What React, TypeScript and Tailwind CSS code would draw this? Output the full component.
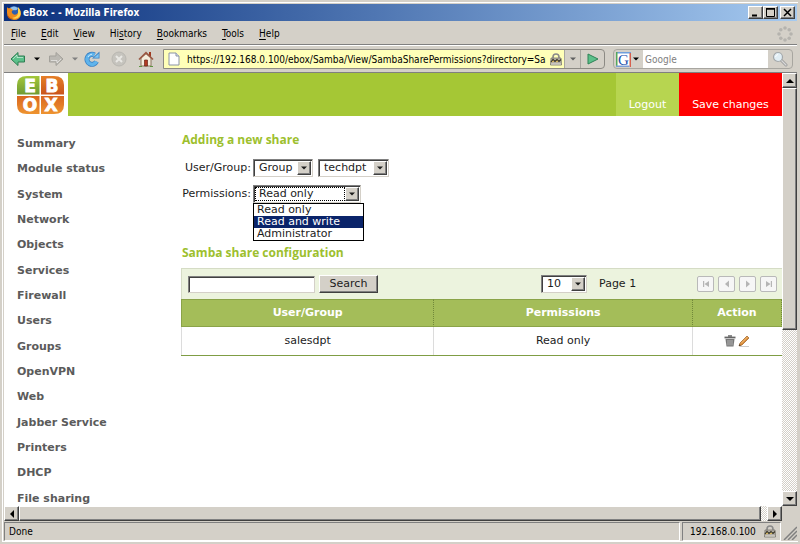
import { useState } from "react"
import type { ReactNode } from "react"

const menuItems = ["File", "Edit", "View", "History", "Bookmarks", "Tools", "Help"]

const navItems = [
  "Summary",
  "Module status",
  "System",
  "Network",
  "Objects",
  "Services",
  "Firewall",
  "Users",
  "Groups",
  "OpenVPN",
  "Web",
  "Jabber Service",
  "Printers",
  "DHCP",
  "File sharing"
]

const permissions = ["Read only", "Read and write", "Administrator"]

const shares = [{ name: "salesdpt", permission: "Read only" }]

const raised =
  "border border-t-white border-l-white border-r-[#404040] border-b-[#404040] bg-[#d4d0c8] shadow-[inset_-1px_-1px_0_#808080]"

const sunken =
  "border border-t-[#808080] border-l-[#808080] border-r-[#d4d0c8] border-b-[#d4d0c8] bg-white shadow-[inset_1px_1px_0_#404040]"

function Triangle({ dir, className }: { dir: "up" | "down" | "left" | "right"; className?: string }) {
  const points = {
    up: "0,6 8,6 4,2",
    down: "0,2 8,2 4,6",
    left: "6,0 6,8 2,4",
    right: "2,0 2,8 6,4"
  }

  return (
    <svg viewBox="0 0 8 8" className={className ?? "size-2"} fill="currentColor">
      <polygon points={points[dir]} />
    </svg>
  )
}

function FirefoxIcon() {
  return (
    <svg viewBox="0 0 16 16" className="size-4">
      <circle cx="8" cy="7" r="6" fill="#2f5fae" />
      <path d="M4 3Q8 0 12 3Q11 6 8 5Q6 6 4 3Z" fill="#8fc1ee" />
      <path d="M1 2Q2 4 4 3Q6 4 7 5Q5 6 6 8Q8 11 11 9Q13 7 12 3Q15 5 15 9Q14 15 8 15Q1 14 1 8Z" fill="#ee8a1c" />
      <path d="M12 2Q16 6 14 11Q11 15 6 13Q12 12 12 8Z" fill="#ffd34d" />
      <path d="M1 8Q2 13 7 14Q3 14 2 12Z" fill="#b8480d" />
    </svg>
  )
}

function ArrowIcon({ flip, fill, stroke }: { flip?: boolean; fill: string; stroke: string }) {
  return (
    <svg viewBox="0 0 16 16" className={flip ? "size-4 rotate-180" : "size-4"}>
      <path d="M1 8L8 1.500V5H14.500V11H8V14.500Z" fill={fill} stroke={stroke} strokeLinejoin="round" />
      <path d="M3 8L7 4V6.500H13" fill="none" stroke="#fff" strokeOpacity="0.5" />
    </svg>
  )
}

function ReloadIcon() {
  return (
    <svg viewBox="0 0 16 16" className="size-4">
      <path d="M12.500 10.500A5 5 0 1 1 10.500 4" fill="none" stroke="#3b82c4" strokeWidth="5" />
      <path d="M8 7.500H15.500V.5Z" fill="#3b82c4" />
      <path d="M12.500 10.500A5 5 0 1 1 10.500 4" fill="none" stroke="#5fb4ec" strokeWidth="3.400" />
      <path d="M10 6.700H14.700V2.500Z" fill="#7cc6f5" />
      <path d="M4 6Q5 3.500 8 3.200" fill="none" stroke="#c9eaff" />
    </svg>
  )
}

function StopIcon() {
  return (
    <svg viewBox="0 0 16 16" className="size-4">
      <circle cx="8" cy="8" r="7" fill="#c6c4be" stroke="#b9b7b1" />
      <path d="M5 5L11 11M11 5L5 11" stroke="#e9e8e4" strokeWidth="2" />
    </svg>
  )
}

function HomeIcon() {
  return (
    <svg viewBox="0 0 16 16" className="size-4">
      <path d="M11 1H13V6H11Z" fill="#a03a20" />
      <path d="M3 7L8 2.500L13 7V15H3Z" fill="#f4eddd" stroke="#8a7560" />
      <path d="M1 8.500L8 1.800L15 8.500" fill="none" stroke="#9a5844" strokeWidth="1.700" />
      <path d="M6.500 9H9.500V15H6.500Z" fill="#b23a24" stroke="#6d2417" strokeWidth=".7" />
      <path d="M1 15.500H4M12 15.500H15" stroke="#5d9440" />
    </svg>
  )
}

function LockIcon() {
  return (
    <svg viewBox="0 0 12 13" className="h-[13px] w-3 shrink-0">
      <path d="M3 6V4Q3 1 6 1T9 4V6" fill="none" stroke="#8a8a8a" strokeWidth="1.600" />
      <path d="M1 5H11L11.500 12H.5Z" fill="#b4b0a8" stroke="#77746c" strokeWidth=".8" />
      <path d="M1 9L3 6.500L5 8.500L7 6.500L9 8.500L11 6.500" fill="none" stroke="#3c3828" strokeWidth="1.200" />
      <path d="M2 9L4 8M6 9L8 8" stroke="#e0ba4c" />
      <path d="M1 11H11" stroke="#dedbd4" />
    </svg>
  )
}

function SearchIcon() {
  return (
    <svg viewBox="0 0 16 16" className="size-4">
      <path d="M9 9L14 14" stroke="#9a9a9a" strokeWidth="3" strokeLinecap="round" />
      <path d="M9 9L14 14" stroke="#d8d8d8" strokeWidth="1.300" strokeLinecap="round" />
      <circle cx="6" cy="6" r="4.500" fill="#e1eef5" stroke="#a4a8aa" strokeWidth="1.200" />
      <path d="M3.500 6Q4 4 6 3.500" fill="none" stroke="#fff" />
    </svg>
  )
}

function Throbber() {
  const dots = [
    [8, 2],
    [12.2, 3.8],
    [14, 8],
    [12.2, 12.2],
    [8, 14],
    [3.8, 12.2],
    [2, 8],
    [3.8, 3.8]
  ]

  return (
    <svg viewBox="0 0 16 16" className="size-4" fill="#b5b3ae">
      {dots.map(([x, y]) => (
        <circle key={`${x}-${y}`} cx={x} cy={y} r="1.800" />
      ))}
    </svg>
  )
}

function EboxLogo() {
  return (
    <svg viewBox="0 0 47 38" className="h-[38px] w-[47px]" role="img" aria-label="eBox">
      <defs>
        <linearGradient id="green" x1="0" y1="0" x2="0" y2="1">
          <stop offset="0" stopColor="#a3c83a" />
          <stop offset="1" stopColor="#6f9a33" />
        </linearGradient>
        <linearGradient id="rust" x1="0" y1="0" x2="0" y2="1">
          <stop offset="0" stopColor="#e57f28" />
          <stop offset="1" stopColor="#c9541c" />
        </linearGradient>
        <linearGradient id="orange" x1="0" y1="0" x2="0" y2="1">
          <stop offset="0" stopColor="#d9661f" />
          <stop offset="1" stopColor="#ee9430" />
        </linearGradient>
      </defs>
      <path d="M22.500 0V18.500H0V9Q0 0 10 0Z" fill="url(#green)" />
      <path d="M24 0H37Q47 0 47 9V18.500H24Z" fill="url(#rust)" />
      <path d="M0 20H22.500V38H10Q0 38 0 29Z" fill="url(#orange)" />
      <path d="M24 20H47V29Q47 38 37 38H24Z" fill="url(#orange)" />
      <g fill="#fff" stroke="#fff" strokeWidth=".9" fontSize="17" fontWeight="bold" textAnchor="middle" fontFamily="DejaVu Sans, sans-serif">
        <text x="13" y="16">E</text>
        <text x="35" y="16">B</text>
        <text x="13" y="35">O</text>
        <text x="34" y="35">X</text>
      </g>
    </svg>
  )
}

function TrashIcon() {
  return (
    <svg viewBox="0 0 12 12" className="size-3">
      <path d="M4 1H8" stroke="#666" strokeWidth="1.500" />
      <path d="M.5 2.500H11.500" stroke="#666" strokeWidth="1.800" />
      <path d="M1.500 4H10.500L9.500 11.500H2.500Z" fill="#777" />
      <path d="M4 5V10.500M6 5V10.500M8 5V10.500" stroke="#c5c5c5" strokeWidth=".8" />
    </svg>
  )
}

function PencilIcon() {
  return (
    <svg viewBox="0 0 12 12" className="size-3">
      <path d="M2 11.500H11" stroke="#ccc" />
      <path d="M1 11L2 8L9 1L11 3L4 10Z" fill="#d98a35" stroke="#9c6228" strokeWidth=".7" />
      <path d="M3 8.500L9.500 2" stroke="#f7c583" />
      <path d="M1 11L1.500 9.300L2.700 10.500Z" fill="#333" />
    </svg>
  )
}

function PagerIcon({ kind }: { kind: string }) {
  const paths: Record<string, string> = {
    First: "M2 2V8H3.200V2ZM8 2V8L3.500 5Z",
    Previous: "M7 1.500V8.500L3 5Z",
    Next: "M3 1.500V8.500L7 5Z",
    Last: "M8 2V8H6.800V2ZM2 2V8L6.500 5Z"
  }

  return (
    <svg viewBox="0 0 10 10" className="size-2.5" fill="#b5b5b5">
      <path d={paths[kind]} />
    </svg>
  )
}

function SelectBox({
  id,
  label,
  options,
  className,
  focused
}: {
  id: string
  label?: string
  options: string[]
  className: string
  focused?: boolean
}) {
  return (
    <span className={`relative inline-flex h-[18px] ${className}`}>
      <select
        id={id}
        aria-label={label}
        className={`w-full appearance-none pl-[5px] pr-4 text-[11px] leading-3 outline-none ${sunken}`}
      >
        {options.map((o) => (
          <option key={o}>{o}</option>
        ))}
      </select>
      {focused && (
        <span className="pointer-events-none absolute inset-y-0.5 left-0.5 right-4 border border-dotted border-black" />
      )}
      <span className={`pointer-events-none absolute inset-y-0.5 right-0.5 flex w-3.5 items-center justify-center ${raised}`}>
        <Triangle dir="down" className="size-1.5" />
      </span>
    </span>
  )
}

function ScrollButton({ label, dir }: { label: string; dir: "up" | "down" | "left" | "right" }) {
  return (
    <button aria-label={label} className={`flex size-[15px] shrink-0 items-center justify-center ${raised}`}>
      <Triangle dir={dir} />
    </button>
  )
}

function CaptionButton({ label, children }: { label: string; children: ReactNode }) {
  return (
    <button aria-label={label} className={`flex h-[13px] w-[15px] items-center justify-center ${raised}`}>
      <svg viewBox="0 0 9 9" className="size-[9px]" fill="none" stroke="#000">
        {children}
      </svg>
    </button>
  )
}

const track = "bg-[repeating-conic-gradient(#fff_0_25%,#d4d0c8_0_50%)] bg-[length:2px_2px]"

export default function App() {
  const [active, setActive] = useState("Read and write")

  return (
    <div className="flex h-screen flex-col overflow-hidden border-2 border-[#d4d0c8] bg-[#d4d0c8] font-['DejaVu_Sans_Condensed','DejaVu_Sans',sans-serif] text-[10px] text-black">
      <div className="flex min-h-0 flex-1 flex-col border border-r-0 border-white pl-px pr-px pt-px">

        {/* TITLE BAR */}
        <div className="flex h-[17px] shrink-0 items-center bg-linear-to-r from-[#0a2f7c] to-[#a6caf0] pl-0.5 pr-0.5">
          <FirefoxIcon />
          <h1 className="ml-px flex-1 text-[10px] font-bold text-white">eBox - - Mozilla Firefox</h1>
          <CaptionButton label="Minimize">
            <path d="M1 7.500H6" strokeWidth="2" />
          </CaptionButton>
          <CaptionButton label="Maximize">
            <path d="M.5 1H8.500M.5 0V8.500H8.500V0" />
            <path d="M0 .5H9" strokeWidth="2" />
          </CaptionButton>
          <span className="w-0.5" />
          <CaptionButton label="Close">
            <path d="M1 1L8 8M8 1L1 8" strokeWidth="1.500" />
          </CaptionButton>
        </div>

        {/* MENU BAR */}
        <div className="flex h-6 shrink-0 items-center border-b border-[#808080] pl-[7px] pr-1 pt-0.5">
          <nav className="flex flex-1 gap-[15px]">
            {menuItems.map((item) => {
              const key = item === "History" ? 2 : 0
              return (
                <button key={item}>
                  {item.slice(0, key)}
                  <span className="underline underline-offset-2">{item[key]}</span>
                  {item.slice(key + 1)}
                </button>
              )
            })}
          </nav>
          <Throbber />
        </div>

        {/* TOOLBAR */}
        <div className="flex h-7 shrink-0 items-center border-t border-b border-t-white border-b-[#808080] pl-1.5 pr-1">
          <button aria-label="Back"><ArrowIcon fill="#5cc08a" stroke="#2e7d52" /></button>
          <button aria-label="Back history" className="ml-2"><Triangle dir="down" className="size-1.5" /></button>
          <button aria-label="Forward" className="ml-2"><ArrowIcon flip fill="#bbb9b3" stroke="#a3a19b" /></button>
          <button aria-label="Forward history" className="ml-2 text-[#808080]"><Triangle dir="down" className="size-1.5" /></button>
          <button aria-label="Reload" className="ml-1.5"><ReloadIcon /></button>
          <button aria-label="Stop" className="ml-[11px]"><StopIcon /></button>
          <button aria-label="Home" className="ml-[11px]"><HomeIcon /></button>

          <div className="ml-[9px] flex h-5 min-w-0 flex-1 items-stretch rounded-r border border-[#8c8a84]">
            <div className="flex min-w-0 flex-1 items-center bg-[#ffffb8] pl-1 pr-0.5">
              <svg viewBox="0 0 12 14" className="h-3.5 w-3 shrink-0">
                <path d="M1 1H8L11 4V13H1Z" fill="#fff" stroke="#8a93a5" />
                <path d="M8 1V4H11" fill="#dfe5ef" stroke="#8a93a5" />
              </svg>
              <input
                aria-label="Address"
                className="ml-[7px] mr-1 min-w-0 flex-1 bg-transparent outline-none"
                defaultValue="https://192.168.0.100/ebox/Samba/View/SambaSharePermissions?directory=Samba"
              />
              <LockIcon />
            </div>
            <button aria-label="Show history" className="flex w-4 items-center justify-center border-l border-[#a8a6a0] text-[#606060]">
              <Triangle dir="down" className="size-1.5" />
            </button>
            <button aria-label="Go" className="flex w-6 items-center justify-center border-l border-[#a8a6a0]">
              <svg viewBox="0 0 12 12" className="size-3">
                <path d="M1 1L11 6L1 11Z" fill="#5cc08a" stroke="#2e8257" strokeLinejoin="round" />
              </svg>
            </button>
          </div>

          <div className="ml-2 flex h-5 w-[180px] shrink-0 items-stretch rounded border border-[#a8a6a0]">
            <button aria-label="Search engine" className="flex w-[29px] items-center gap-0.5 pl-0.5">
              <svg viewBox="0 0 15 15" className="size-[15px]">
                <path d="M0 0H15V15H0Z" fill="#fff" />
                <path d="M0 0H15V1.500H0Z" fill="#6f9fdc" />
                <path d="M0 0H1.500V15H0Z" fill="#56a65a" />
                <path d="M13.500 1H15V15H13.500Z" fill="#d6604e" />
                <path d="M0 13.500H13.500V15H0Z" fill="#7d9fd6" />
                <text x="7.500" y="12.500" fontSize="15" textAnchor="middle" fill="#1d4fae" fontFamily="Liberation Serif, serif">G</text>
              </svg>
              <Triangle dir="down" className="size-1.5" />
            </button>
            <input aria-label="Web search" placeholder="Google" className="min-w-0 flex-1 bg-white pl-0.5 outline-none placeholder:text-[#808080]" />
            <button aria-label="Go search" className="flex w-6 items-center justify-center">
              <SearchIcon />
            </button>
          </div>
        </div>

        {/* VIEWPORT */}
        <div className="flex min-h-0 flex-1">
          <div className="flex min-w-0 flex-1 flex-col overflow-hidden bg-white font-['DejaVu_Sans',Verdana,sans-serif] text-[11px] text-[#1c1c1c]">

            <header className="flex h-[43px] shrink-0 text-white">
              <div className="flex w-16 justify-center pt-[3px] pl-2">
                <EboxLogo />
              </div>
              <div className="flex-1 bg-[#a5c735]" />
              <a href="#logout" className="flex w-[63px] items-end justify-center bg-[#b7d550] pb-[3px]">Logout</a>
              <a href="#save" className="flex w-[103px] items-end justify-center bg-[#ff0000] pb-[3px]">Save changes</a>
            </header>

            <div className="flex min-h-0 flex-1">
              <ul className="flex w-[177px] shrink-0 flex-col justify-between pl-[13px] pt-5 font-bold leading-[15px] text-[#5b5b5b]">
                {navItems.map((item) => (
                  <li key={item}>
                    <a href="#nav">{item}</a>
                  </li>
                ))}
              </ul>

              <main className="min-w-0 flex-1 pt-4">
                <h2 className="pl-px font-['Open_Sans',sans-serif] text-[12px] font-bold leading-4 text-[#9dbf2e]">
                  Adding a new share
                </h2>

                <div className="mt-[11px] flex items-center">
                  <label htmlFor="kind" className="w-[72px] pr-0.5 text-right">User/Group:</label>
                  <SelectBox id="kind" options={["Group", "User"]} className="w-[60px]" />
                  <SelectBox id="name" label="Group name" options={["techdpt"]} className="ml-[5px] w-[71px]" />
                </div>

                <div className="mt-2 flex items-center">
                  <label htmlFor="permissions" className="w-[72px] whitespace-nowrap pr-0.5 text-right">Permissions:</label>
                  <div className="relative flex">
                    <SelectBox id="permissions" options={permissions} className="w-[108px]" focused />
                    <ul role="listbox" aria-label="Permissions" className="absolute left-0 top-full w-[111px] border border-black bg-white leading-3">
                      {permissions.map((p) => (
                        <li
                          key={p}
                          role="option"
                          aria-selected={p === active}
                          onMouseEnter={() => setActive(p)}
                          className={p === active ? "bg-[#0a246a] pl-[3px] text-white" : "pl-[3px]"}
                        >
                          {p}
                        </li>
                      ))}
                    </ul>
                  </div>
                </div>

                <h2 className="mt-[42px] pl-px font-['Open_Sans',sans-serif] text-[12px] font-bold leading-4 text-[#9dbf2e]">
                  Samba share configuration
                </h2>

                <div className="mt-[7px] flex h-[31px] items-center border-t border-l border-[#d5dcc5] bg-[#ecf3de] pl-1.5 pr-[5px]">
                  <input aria-label="Search shares" className={`h-[17px] w-[127px] px-1 outline-none ${sunken}`} />
                  <button className={`ml-1 flex h-[18px] w-[59px] items-center justify-center ${raised}`}>Search</button>
                  <div className="flex-1" />
                  <SelectBox id="rows" label="Rows per page" options={["10", "20"]} className="w-[46px]" />
                  <span className="ml-3 w-[98px]">Page 1</span>
                  <div className="flex gap-1">
                    {["First", "Previous", "Next", "Last"].map((kind) => (
                      <button
                        key={kind}
                        aria-label={`${kind} page`}
                        className="flex h-4 w-[17px] items-center justify-center rounded-xs border border-[#b9b9b9] bg-[#f6f6f6]"
                      >
                        <PagerIcon kind={kind} />
                      </button>
                    ))}
                  </div>
                </div>

                <table className="w-full table-fixed border-separate border-spacing-0 border-b border-[#7f9d44] text-center">
                  <thead>
                    <tr className="h-7 bg-[#a4bd59] text-white">
                      <th className="w-[42%] border-y border-l border-[#8aa348]">User/Group</th>
                      <th className="w-[43%] border-y border-l border-[#8aa348] border-l-[#71883a] [border-left-style:dotted]">Permissions</th>
                      <th className="w-[15%] border-y border-x border-[#8aa348] border-x-[#71883a] [border-left-style:dotted] [border-right-style:dotted]">Action</th>
                    </tr>
                  </thead>
                  <tbody>
                    {shares.map((s) => (
                      <tr key={s.name} className="h-7">
                        <td className="border-l border-[#dcdcdc]">{s.name}</td>
                        <td className="border-l border-[#dcdcdc]">{s.permission}</td>
                        <td className="border-l border-[#dcdcdc]">
                          <div className="flex items-center justify-center gap-0.5">
                            <button aria-label="Delete"><TrashIcon /></button>
                            <button aria-label="Edit"><PencilIcon /></button>
                          </div>
                        </td>
                      </tr>
                    ))}
                  </tbody>
                </table>
              </main>
            </div>
          </div>

          <div className={`flex w-[15px] shrink-0 flex-col ${track}`}>
            <ScrollButton label="Scroll up" dir="up" />
            <div className={`h-[242px] ${raised}`} />
            <div className="flex-1" />
            <ScrollButton label="Scroll down" dir="down" />
          </div>
        </div>

        <div className="flex h-[15px] shrink-0 pr-[15px]">
          <ScrollButton label="Scroll left" dir="left" />
          <div className={`flex flex-1 pr-1.5 ${track}`}>
            <div className={`flex-1 ${raised}`} />
          </div>
          <ScrollButton label="Scroll right" dir="right" />
        </div>

        {/* STATUS BAR */}
        <footer className="mt-px flex h-[19px] shrink-0 gap-0.5">
          <div className="flex flex-1 items-center border border-[#808080] border-b-white border-r-white pl-1">Done</div>
          <div className="flex w-[99px] items-center justify-between border border-[#808080] border-b-white border-r-white pl-[7px] pr-1">
            192.168.0.100
            <LockIcon />
          </div>
          <svg viewBox="0 0 14 14" className="mt-1 size-3.5" stroke="#808080" strokeWidth="1.500">
            <path d="M1 14L14 1M5 14L14 5M9 14L14 9" />
          </svg>
        </footer>
      </div>
    </div>
  )
}
